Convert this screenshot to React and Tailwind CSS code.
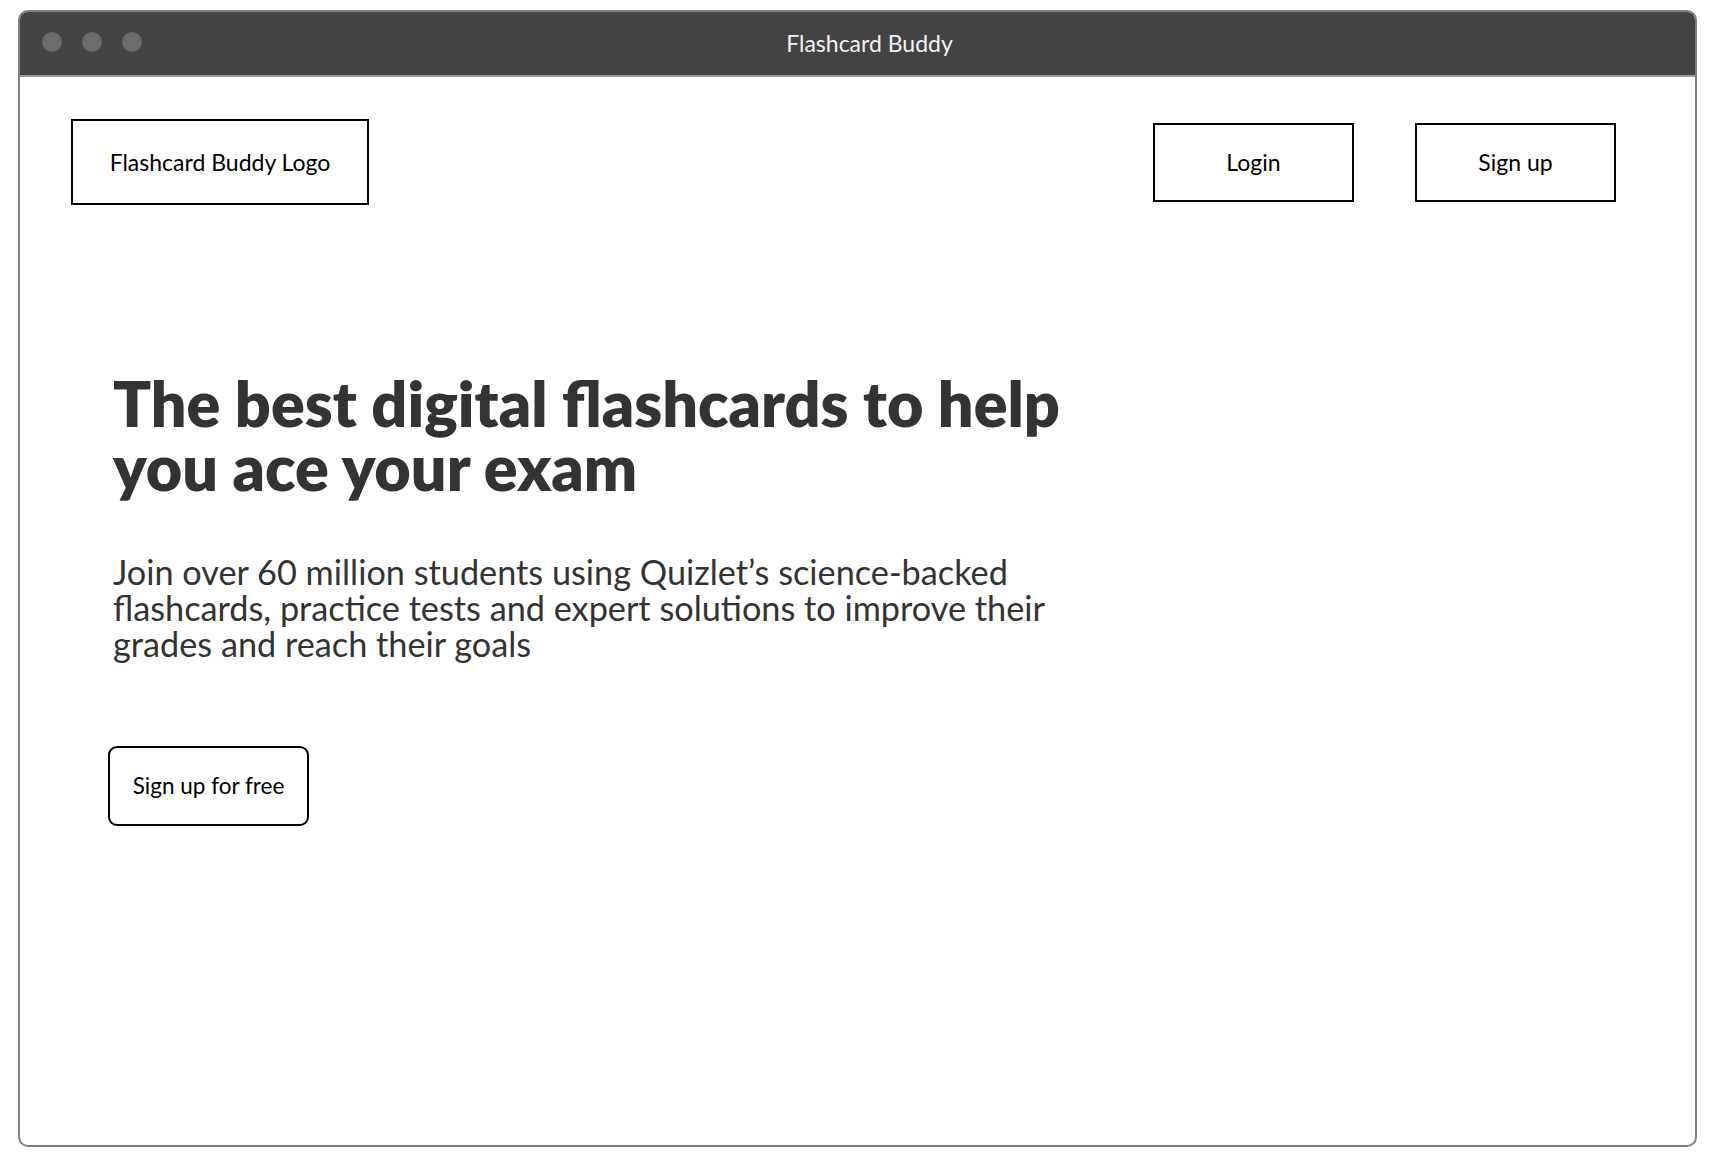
const font = { fontFamily: 'Lato, "Open Sans", sans-serif' };

const NavBox = ({ children }) => (
  <button className="w-[201px] h-[79px] border-2 border-black bg-white text-[23px] text-black">
    {children}
  </button>
);

export default function App() {
  return (
    <div className="w-[1722px] h-[1168px] bg-white pt-[10px] pl-[18px]" style={font}>
      {/* Fenêtre */}
      <div className="w-[1679px] h-[1137px] border-2 border-[#808080] rounded-[10px] overflow-hidden flex flex-col">
        {/* Barre de titre */}
        <div className="relative h-[65px] bg-[#434343] border-b-2 border-[#9a9a9a] flex items-center justify-center pl-[24px]">
          <div className="absolute left-[22px] top-[20px] flex gap-[20px]">
            <span className="w-[20px] h-[20px] rounded-full bg-[#6b6b6b]"></span>
            <span className="w-[20px] h-[20px] rounded-full bg-[#6b6b6b]"></span>
            <span className="w-[20px] h-[20px] rounded-full bg-[#6b6b6b]"></span>
          </div>
          <span className="text-[23px] text-[#f2f2f2]">Flashcard Buddy</span>
        </div>

        {/* En-tête */}
        <div className="flex items-start justify-between pt-[42px] pl-[51px] pr-[79px]">
          <div className="w-[298px] h-[86px] border-2 border-black flex items-center justify-center text-[23px] text-black">
            Flashcard Buddy Logo
          </div>
          <div className="flex gap-[61px] mt-[4px]">
            <NavBox>Login</NavBox>
            <NavBox>Sign up</NavBox>
          </div>
        </div>

        {/* Hero */}
        <div className="pl-[93px] pt-[166px]">
          <h1 className="max-w-[1000px] text-[62.8px] leading-[64px] font-extrabold text-[#333333]">
            The best digital flashcards to help you ace your exam
          </h1>
          <p className="mt-[55px] max-w-[960px] text-[34.25px] leading-[36px] text-[#333333]">
            Join over 60 million students using Quizlet’s science-backed flashcards, practice tests and expert solutions to improve their grades and reach their goals
          </p>
          <button className="mt-[84px] -ml-[5px] w-[201px] h-[80px] border-2 border-black rounded-[9px] text-[22.5px] text-black">
            Sign up for free
          </button>
        </div>
      </div>
    </div>
  );
}
